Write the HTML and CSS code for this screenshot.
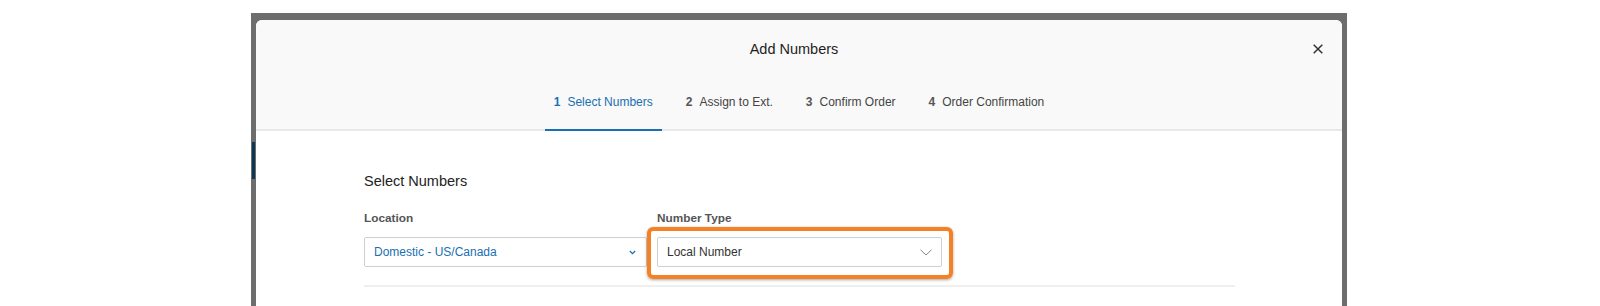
FILE: index.html
```html
<!DOCTYPE html>
<html lang="en">
<head>
    <meta charset="UTF-8">
    <meta name="viewport" content="width=device-width, initial-scale=1.0">
    <title>Add Numbers</title>
    <link rel="stylesheet" href="styles.css">
</head>
<body>

    <div class="backdrop">
        <div class="modal">

            <!-- Modal Header -->
            <div class="modal-header">
                <h2 class="modal-title">Add Numbers</h2>
                <button class="close-btn" aria-label="Close">
                    <svg width="10" height="10" viewBox="0 0 10 10">
                        <path d="M0.7 0.7 L9.3 9.3 M9.3 0.7 L0.7 9.3" stroke="#333" stroke-width="1.5" fill="none"/>
                    </svg>
                </button>

                <ul class="steps">
                    <li class="step active"><b>1</b>Select Numbers</li>
                    <li class="step"><b>2</b>Assign to Ext.</li>
                    <li class="step"><b>3</b>Confirm Order</li>
                    <li class="step"><b>4</b>Order Confirmation</li>
                </ul>
            </div>

            <!-- Modal Body -->
            <div class="modal-body">
                <h3 class="section-title">Select Numbers</h3>

                <div class="field-row">
                    <div class="field">
                        <label>Location</label>
                        <div class="select-box location">
                            <span>Domestic - US/Canada</span>
                            <svg width="7" height="5" viewBox="0 0 7 5">
                                <path d="M0.8 1 L3.5 3.6 L6.2 1" stroke="#1a6fb3" stroke-width="1.3" fill="none"/>
                            </svg>
                        </div>
                    </div>

                    <div class="field">
                        <label>Number Type</label>
                        <div class="select-box">
                            <span>Local Number</span>
                            <svg width="12" height="7" viewBox="0 0 12 7">
                                <path d="M0.5 0.8 L6 6 L11.5 0.8" stroke="#8a8a8a" stroke-width="1" fill="none"/>
                            </svg>
                            <!-- highlight annotation -->
                            <div class="highlight"></div>
                        </div>
                    </div>

                    <div class="field"></div>
                </div>

                <hr class="divider">
            </div>

        </div>
    </div>

</body>
</html>
```

FILE: styles.css
```css
body {
    font-family: "Liberation Sans", Arial, sans-serif;
    margin: 0;
    padding: 0;
    background-color: #fff;
}
.backdrop {
    margin: 13px 0 0 251px;
    width: 1086px;
    height: 293px;
    padding: 7px 5px 0 5px;
    background: linear-gradient(#0f3653, #0f3653) no-repeat 1px 129px / 3px 37px, #6d6d6d;
}
.modal {
    background-color: #fff;
    border-radius: 6px 6px 0 0;
    height: 100%;
    overflow: hidden;
}

/* Header */
.modal-header {
    position: relative;
    background-color: #f9f9f9;
    border-bottom: 2px solid #e8e8e8;
    padding-top: 19px;
}
.modal-title {
    margin: 0;
    padding-right: 10px;
    text-align: center;
    font-size: 14.5px;
    font-weight: normal;
    line-height: 20px;
    color: #1e1e1e;
}
.close-btn {
    position: absolute;
    top: 24px;
    right: 19px;
    width: 10px;
    height: 10px;
    padding: 0;
    border: none;
    background: none;
    cursor: pointer;
}
.close-btn svg {
    display: block;
}
.steps {
    list-style: none;
    display: flex;
    justify-content: center;
    gap: 15px;
    margin: 19px 0 -2px 0;
    padding: 0;
}
.step {
    padding: 16px 9px 19px 9px;
    font-size: 12px;
    line-height: 16px;
    color: #444;
    border-bottom: 2px solid transparent;
}
.step b {
    margin-right: 7px;
    color: #555;
}
.step.active {
    color: #1a6fb3;
    border-bottom-color: #1a6fb3;
}
.step.active b {
    color: #1a6fb3;
}

/* Body */
.modal-body {
    padding: 40px 107px 0 108px;
}
.section-title {
    margin: 0 0 19px 0;
    font-size: 14.5px;
    font-weight: normal;
    line-height: 20px;
    color: #222;
}
.field-row {
    display: grid;
    grid-template-columns: 283px 285px 1fr;
    column-gap: 10px;
}
.field label {
    display: block;
    font-size: 11.8px;
    font-weight: bold;
    line-height: 16px;
    color: #555;
    margin-bottom: 11px;
}
.select-box {
    position: relative;
    display: flex;
    justify-content: space-between;
    align-items: center;
    height: 30px;
    box-sizing: border-box;
    border: 1px solid #cfcfcf;
    border-radius: 2px;
    padding: 0 9px 0 9px;
    font-size: 12px;
    color: #333;
    background-color: #fff;
}
.select-box.location {
    color: #1a6fb3;
    padding-right: 10px;
}
.select-box svg {
    display: block;
}
.highlight {
    position: absolute;
    top: -11px;
    left: -11px;
    right: -12px;
    bottom: -13px;
    border: 4px solid #f58026;
    border-radius: 6px;
    box-shadow: 0 1px 3px rgba(0, 0, 0, 0.35);
}
.divider {
    margin: 18px 0 0 0;
    border: none;
    border-top: 2px solid #efefef;
}
```
